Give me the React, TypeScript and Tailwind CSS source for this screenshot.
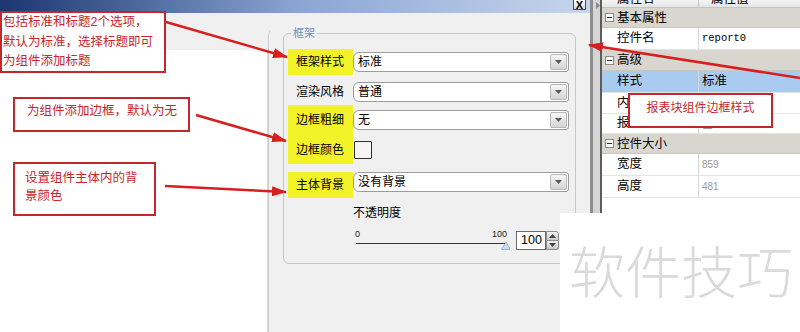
import React from 'react';

const font = "font-['Liberation_Sans','Noto_Sans_CJK_SC',sans-serif]";

function Select({ value }: { value: string }) {
  return (
    <div className="flex h-[20px] w-[216px] items-stretch rounded-l-[6px] rounded-r-[3px] border border-[#9c9c9c] bg-white">
      <span className="flex-1 pl-[4px] text-[12px] leading-[18px] text-black">{value}</span>
      <span className="m-px flex w-[17px] items-center justify-center rounded-[2px] border border-[#b8b8b8] bg-linear-to-b from-[#f6f6f6] to-[#d4d4d4]">
        <svg width="7" height="4" viewBox="0 0 7 4">
          <path d="M0 0h7L3.5 4z" fill="#5a5a5a" />
        </svg>
      </span>
    </div>
  );
}

function Category({ label, h }: { label: string; h: string }) {
  return (
    <div className={`flex items-center border-b border-[#c9c6c0] bg-[#d9d6d0] ${h}`}>
      <span className="ml-[3px] mr-[3px] flex h-[9px] w-[9px] items-center justify-center border border-[#8a8a8a] bg-white">
        <span className="h-px w-[5px] bg-[#333]" />
      </span>
      <span className="text-[12.5px] leading-[16px] text-black">{label}</span>
    </div>
  );
}

function PropRow({ label, h, selected, children }: { label: string; h: string; selected?: boolean; children?: React.ReactNode }) {
  return (
    <div className={`flex border-b border-[#e4e4e4] ${h} ${selected ? 'bg-[#a9cbef]' : 'bg-white'}`}>
      <div className="flex w-[97px] items-center overflow-hidden whitespace-nowrap border-r border-[#d6d6d6] pl-[15px] text-[12.5px] text-black">{label}</div>
      <div className="flex flex-1 items-center pl-[3px]">{children}</div>
    </div>
  );
}

export default function App() {
  return (
    <div className={`relative flex h-[332px] w-[800px] overflow-hidden bg-white ${font}`}>
      {/* dialog */}
      <div className="flex w-[590px] flex-col">
        <div className="flex h-[13px] items-start justify-end bg-linear-to-r from-[#1d3570] via-[#8aa5d2] to-[#c8d6ed] pr-[4px]">
          <div className="flex h-[10px] w-[13px] items-center justify-center border border-t-0 border-[#4a4a4a] bg-linear-to-b from-white to-[#dcdcdc] font-['Liberation_Sans',sans-serif] text-[11px] font-bold leading-[10px] text-black">
            X
          </div>
        </div>
        <div className="flex flex-1 bg-[#f0f0f0]">
          <div className="flex w-[268px] flex-col">
            <div className="h-[37px]" />
            <div className="flex-1 border-r border-[#d8d8d8] bg-white" />
          </div>
          <div className="flex flex-1 flex-col pt-[15px]">
            <div className="flex-1 rounded-tl-[7px] border-l border-t border-[#cdcdcd] border-t-transparent pl-[14px]">
              <fieldset className="-mt-[3px] h-[238px] w-[293px] rounded-[6px] border border-[#c6c6c6] px-[4px] pt-[9px]">
                <legend className="ml-[3px] px-[2px] text-[11px] leading-[14px] text-[#6f8fc2]">框架</legend>
                <div className="flex h-[26px] items-center">
                  <div className="flex h-full w-[65px] items-center bg-[#f2f229] pl-[8px] text-[12px] text-black">框架样式</div>
                  <Select value="标准" />
                </div>
                <div className="mt-[4px] flex h-[26px] items-center">
                  <div className="w-[65px] pl-[8px] text-[12px] text-black">渲染风格</div>
                  <Select value="普通" />
                </div>
                <div className="flex h-[59px]">
                  <div className="flex w-[65px] flex-col bg-[#f2f229] pl-[8px] text-[12px] text-black">
                    <div className="flex h-[30px] items-center">边框粗细</div>
                    <div className="flex h-[29px] items-center">边框颜色</div>
                  </div>
                  <div className="flex flex-col">
                    <div className="flex h-[30px] items-center">
                      <Select value="无" />
                    </div>
                    <div className="flex h-[29px] items-center">
                      <div className="ml-px h-[18px] w-[18px] rounded-[1px] border border-[#2e2e2e] bg-[#f5f5f5]" />
                    </div>
                  </div>
                </div>
                <div className="mt-[8px] flex h-[26px] items-start">
                  <div className="flex h-full w-[65px] items-center bg-[#f2f229] pl-[8px] text-[12px] text-black">主体背景</div>
                  <Select value="没有背景" />
                </div>
                <div className="ml-[65px] mt-[7px] text-[12px] leading-[16px] text-black">不透明度</div>
                <div className="ml-[67px] mt-[8px] flex items-start">
                  <div className="flex w-[155px] flex-col">
                    <div className="flex justify-between pr-[3px] font-['Liberation_Sans',sans-serif] text-[9px] leading-[10px] text-[#222]">
                      <span>0</span>
                      <span>100</span>
                    </div>
                    <svg width="155" height="12" viewBox="0 0 155 12">
                      <line x1="1" y1="4.5" x2="150" y2="4.5" stroke="#333" strokeWidth="1" />
                      <path d="M146.5 10.5 L151 3 L155.5 10.5 Z" fill="#c9dcef" stroke="#8aa6c4" strokeWidth="0.8" />
                    </svg>
                  </div>
                  <div className="ml-[6px] mt-[2px] flex h-[19px] w-[30px] items-center border border-[#6a6a6a] bg-white pl-[4px] font-['Liberation_Sans',sans-serif] text-[12.5px] text-black">
                    100
                  </div>
                  <div className="mt-[2px] flex h-[19px] w-[13px] flex-col">
                    <div className="flex flex-1 items-center justify-center rounded-tr-[3px] border border-[#8a8a8a] bg-linear-to-b from-[#f2f2f2] to-[#c8c8c8]">
                      <svg width="7" height="4" viewBox="0 0 7 4"><path d="M0 4h7L3.5 0z" fill="#444" /></svg>
                    </div>
                    <div className="flex flex-1 items-center justify-center rounded-br-[3px] border border-t-0 border-[#8a8a8a] bg-linear-to-b from-[#f2f2f2] to-[#c8c8c8]">
                      <svg width="7" height="4" viewBox="0 0 7 4"><path d="M0 0h7L3.5 4z" fill="#444" /></svg>
                    </div>
                  </div>
                </div>
              </fieldset>
            </div>
          </div>
        </div>
      </div>

      {/* splitter */}
      <div className="flex w-[12px] flex-col border-l-[3px] border-r-2 border-l-[#8e8e8e] border-r-[#5c5c5c] bg-[#d5d5d5]">
        <svg className="ml-[3px] mt-[2px]" width="4" height="7" viewBox="0 0 4 7">
          <path d="M0 0L4 3.5L0 7z" fill="#8c8c8c" />
        </svg>
      </div>

      {/* property grid */}
      <div className="flex w-[198px] flex-col bg-white">
        <div className="flex h-[8px] overflow-hidden border-b border-[#c4c4c4] bg-linear-to-b from-[#f6f6f6] to-[#e4e4e4] text-[12.5px] leading-[14px] text-black">
          <div className="-mt-[8px] w-[97px] border-r border-[#c4c4c4] pl-[15px]">属性名</div>
          <div className="-mt-[8px] pl-[12px]">属性值</div>
        </div>
        <Category label="基本属性" h="h-[20px]" />
        <PropRow label="控件名" h="h-[22px]">
          <span className="font-['Liberation_Mono',monospace] text-[10.5px] text-black">report0</span>
        </PropRow>
        <Category label="高级" h="h-[21px]" />
        <PropRow label="样式" h="h-[22px]" selected>
          <span className="text-[12.5px] text-black">标准</span>
        </PropRow>
        <PropRow label="内容边距" h="h-[21px]" />
        <PropRow label="报表块主体大小" h="h-[20px]">
          <span className="h-[11px] w-[11px] rounded-[2px] border border-[#9a9a9a] bg-white" />
        </PropRow>
        <Category label="控件大小" h="h-[20px]" />
        <PropRow label="宽度" h="h-[22px]">
          <span className="font-['Liberation_Sans',sans-serif] text-[10px] text-[#9a9a9a]">859</span>
        </PropRow>
        <PropRow label="高度" h="h-[22px]">
          <span className="font-['Liberation_Sans',sans-serif] text-[10px] text-[#9a9a9a]">481</span>
        </PropRow>
      </div>

      {/* annotations */}
      <div className="absolute left-0 top-[11px] h-[62px] w-[166px] border-2 border-[#c3262b] bg-white pl-[1px] text-[12.5px] leading-[19.5px] text-[#c8262c]">
        <div>包括标准和标题2个选项，</div>
        <div>默认为标准，选择标题即可</div>
        <div>为组件添加标题</div>
      </div>
      <div className="absolute left-[13px] top-[97px] h-[35px] w-[177px] border-2 border-[#c3262b] bg-white pl-[12px] pt-[4px] text-[12.5px] leading-[16px] text-[#c8262c]">
        为组件添加边框，默认为无
      </div>
      <div className="absolute left-[13px] top-[162px] h-[54px] w-[143px] border-2 border-[#c3262b] bg-white pl-[10px] pt-[5px] text-[12.5px] leading-[18px] text-[#c8262c]">
        <div>设置组件主体内的背</div>
        <div>景颜色</div>
      </div>
      <div className="absolute left-[628px] top-[93px] h-[35px] w-[145px] border-2 border-[#c3262b] bg-white pt-[5px] text-center text-[12px] leading-[16px] text-[#c8262c]">
        报表块组件边框样式
      </div>

      {/* watermark */}
      <div className="absolute left-[560px] top-[213px] h-[119px] w-[240px] bg-white pl-[9px] pt-[28px] font-['Noto_Sans_CJK_SC',sans-serif] text-[56px] font-light leading-[56px] text-[#dadada]">
        软件技巧
      </div>

      {/* arrows */}
      <svg className="pointer-events-none absolute left-0 top-0" width="800" height="332" viewBox="0 0 800 332">
        <defs>
          <marker id="ah" markerUnits="userSpaceOnUse" markerWidth="15" markerHeight="10" refX="14" refY="5" orient="auto">
            <path d="M0 0L15 5L0 10z" fill="#d61f1f" />
          </marker>
        </defs>
        <g stroke="#d61f1f" strokeWidth="2.5" fill="none">
          <line x1="166" y1="22" x2="287" y2="57" markerEnd="url(#ah)" />
          <line x1="196" y1="115" x2="286" y2="141" markerEnd="url(#ah)" />
          <line x1="165" y1="186" x2="286" y2="192" markerEnd="url(#ah)" />
          <line x1="800" y1="78" x2="589" y2="45" markerEnd="url(#ah)" />
        </g>
      </svg>
    </div>
  );
}
